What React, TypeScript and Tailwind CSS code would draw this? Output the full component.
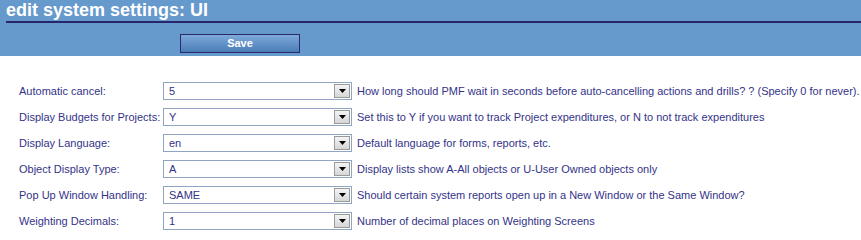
const font = { fontFamily: '"Liberation Sans", Arial, sans-serif' };

const settings = [
  { label: "Automatic cancel:", value: "5", help: "How long should PMF wait in seconds before auto-cancelling actions and drills? ? (Specify 0 for never)." },
  { label: "Display Budgets for Projects:", value: "Y", help: "Set this to Y if you want to track Project expenditures, or N to not track expenditures" },
  { label: "Display Language:", value: "en", help: "Default language for forms, reports, etc." },
  { label: "Object Display Type:", value: "A", help: "Display lists show A-All objects or U-User Owned objects only" },
  { label: "Pop Up Window Handling:", value: "SAME", help: "Should certain system reports open up in a New Window or the Same Window?" },
  { label: "Weighting Decimals:", value: "1", help: "Number of decimal places on Weighting Screens" },
];

function Combo({ value }: { value: string }) {
  return (
    <div className="flex h-[18px] w-[189px] shrink-0 items-stretch border border-[#8fa5c2] bg-white">
      <span className="flex-1 truncate pl-[5px] text-[11px] leading-[16px] text-[#333388]">{value}</span>
      <span className="m-[1px] flex w-[16px] items-center justify-center border border-[#9a9a9a] bg-gradient-to-b from-[#f4f4f4] to-[#d6d6d6]">
        <svg width="7" height="4" viewBox="0 0 7 4">
          <path d="M0 0h7L3.5 4z" fill="#000" />
        </svg>
      </span>
    </div>
  );
}

export default function App() {
  return (
    <div className="h-[234px] w-[861px] overflow-hidden bg-white" style={font}>
      <div className="h-[56px] bg-[#6699cc]">
        <div className="ml-[6px] h-[23px] border-b-2 border-[#26266a]">
          <h1 className="pt-[1px] text-[18px] font-bold leading-[19px] text-white">edit system settings: UI</h1>
        </div>
        <div className="ml-[180px] mt-[11px] flex">
          <button className="block h-[19px] w-[120px] border border-[#2a2a6a] bg-gradient-to-b from-[#7eaadb] to-[#4a7cb6] text-[11px] font-bold leading-[17px] text-white">
            Save
          </button>
        </div>
      </div>
      <div className="pt-[26px]">
        {settings.map((s) => (
          <div key={s.label} className="flex h-[26px] items-start">
            <div className="w-[163px] shrink-0 pl-[19px] text-[11px] leading-[18px] text-[#333388] whitespace-nowrap">{s.label}</div>
            <Combo value={s.value} />
            <div className="pl-[5px] text-[11px] leading-[18px] text-[#333388] whitespace-nowrap">{s.help}</div>
          </div>
        ))}
      </div>
    </div>
  );
}
